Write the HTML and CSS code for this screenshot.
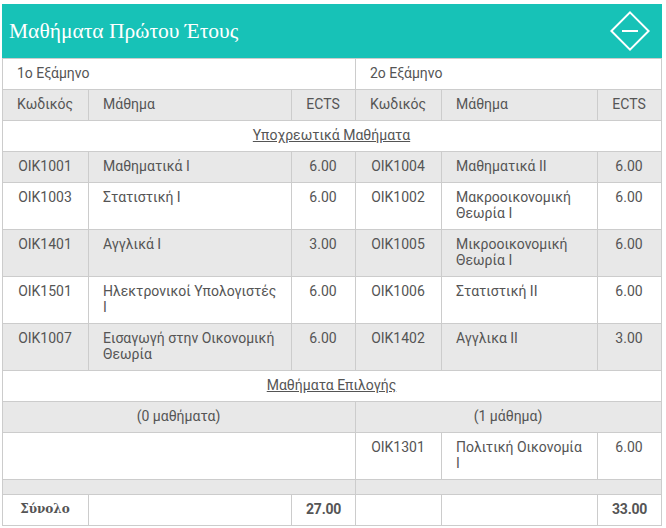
FILE: index.html
```html
<!DOCTYPE html>
<html lang="el">
<head>
<meta charset="utf-8">
<title>Μαθήματα Πρώτου Έτους</title>
<link rel="stylesheet" href="styles.css">
</head>
<body>
<div class="panel">
  <header class="panel-head">
    <h2 class="panel-title">Μαθήματα Πρώτου Έτους</h2>
    <svg class="toggle" width="40" height="40" viewBox="0 0 40 40" fill="none" stroke="#fff" stroke-width="2"><path d="M20 1.4 38.6 20 20 38.6 1.4 20Z"/><path d="M12 20H28"/></svg>
  </header>
  <table class="courses">
    <colgroup><col class="c-code"><col class="c-l"><col class="c-e"><col class="c-code"><col class="c-r"><col class="c-e"></colgroup>
    <tr><td colspan="3">1ο Εξάμηνο</td><td colspan="3">2ο Εξάμηνο</td></tr>
    <tr class="g"><td>Κωδικός</td><td>Μάθημα</td><td class="m">ECTS</td><td>Κωδικός</td><td>Μάθημα</td><td class="m">ECTS</td></tr>
    <tr><td colspan="6" class="m"><u>Υποχρεωτικά Μαθήματα</u></td></tr>
    <tr class="g"><td class="m">ΟΙΚ1001</td><td>Μαθηματικά Ι</td><td class="m">6.00</td><td class="m">ΟΙΚ1004</td><td>Μαθηματικά ΙΙ</td><td class="m">6.00</td></tr>
    <tr><td class="m">ΟΙΚ1003</td><td>Στατιστική Ι</td><td class="m">6.00</td><td class="m">ΟΙΚ1002</td><td>Μακροοικονομική Θεωρία Ι</td><td class="m">6.00</td></tr>
    <tr class="g"><td class="m">ΟΙΚ1401</td><td>Αγγλικά Ι</td><td class="m">3.00</td><td class="m">ΟΙΚ1005</td><td>Μικροοικονομική Θεωρία Ι</td><td class="m">6.00</td></tr>
    <tr><td class="m">ΟΙΚ1501</td><td>Ηλεκτρονικοί Υπολογιστές Ι</td><td class="m">6.00</td><td class="m">ΟΙΚ1006</td><td>Στατιστική ΙΙ</td><td class="m">6.00</td></tr>
    <tr class="g"><td class="m">ΟΙΚ1007</td><td>Εισαγωγή στην Οικονομική Θεωρία</td><td class="m">6.00</td><td class="m">ΟΙΚ1402</td><td>Αγγλικα ΙΙ</td><td class="m">3.00</td></tr>
    <tr><td colspan="6" class="m"><u>Μαθήματα Επιλογής</u></td></tr>
    <tr class="g"><td colspan="3" class="m">(0 μαθήματα)</td><td colspan="3" class="m">(1 μάθημα)</td></tr>
    <tr><td colspan="3"></td><td class="m">ΟΙΚ1301</td><td>Πολιτική Οικονομία Ι</td><td class="m">6.00</td></tr>
    <tr class="g"><td colspan="3"></td><td colspan="3"></td></tr>
    <tr class="total"><td class="m label">Σύνολο</td><td></td><td class="m">27.00</td><td></td><td></td><td class="m">33.00</td></tr>
  </table>
</div>
</body>
</html>
```
FILE: styles.css
```css
html, body { background: #fff; }
body { margin: 0; padding: 4px 0 0 2px; width: 660px; font-family: Roboto, sans-serif; font-size: 14px; color: #555; }
.panel { width: 660px; }
.panel-head { display: flex; align-items: center; justify-content: space-between; height: 54px; padding: 0 12px 0 7px; box-sizing: border-box; background: #17c2b7; }
.panel-title { margin: 0; font-family: "Liberation Serif", serif; font-weight: 400; font-size: 21.5px; color: #fff; }
.toggle { display: block; }
.courses { width: 660px; table-layout: fixed; border-collapse: collapse; line-height: 16px; }
.c-code { width: 86px; }
.c-l { width: 203px; }
.c-e { width: 64px; }
.c-r { width: 156px; }
.courses td { padding: 6px 14px 8px; border: 1px solid #ccc; vertical-align: top; }
.courses .m { text-align: center; padding-right: 15px; }
.g td { background: #e8e8e8; }
.total td { font-weight: 700; letter-spacing: -0.2px; }
.total .label { font-family: "DejaVu Serif", serif; font-size: 12px; letter-spacing: 0; }
```
